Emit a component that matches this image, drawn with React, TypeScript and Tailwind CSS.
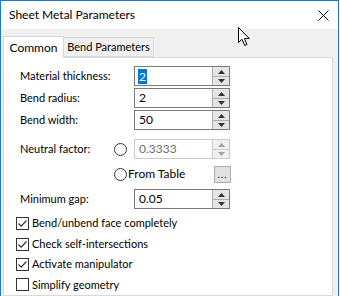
import React from 'react';

const font = { fontFamily: 'Lato, "Noto Sans", sans-serif' };

const Spinner: React.FC<{ disabled?: boolean }> = ({ disabled }) => {
  const fill = disabled ? '#a0a0a0' : '#333';
  return (
    <div className={`flex flex-col w-[17px] h-full border-l ${disabled ? 'border-[#cccccc]' : 'border-[#adadad]'}`}>
      <div className={`flex-1 flex items-center justify-center ${disabled ? 'bg-[#f0f0f0] border-[#cccccc]' : 'bg-[#e5e5e5] border-[#adadad]'} border-b`}>
        <svg width="7" height="4" viewBox="0 0 7 4"><path d="M0 4 L3.5 0 L7 4 Z" fill={fill} /></svg>
      </div>
      <div className={`flex-1 flex items-center justify-center ${disabled ? 'bg-[#f0f0f0]' : 'bg-[#e5e5e5]'}`}>
        <svg width="7" height="4" viewBox="0 0 7 4"><path d="M0 0 L3.5 4 L7 0 Z" fill={fill} /></svg>
      </div>
    </div>
  );
};

const NumberBox: React.FC<{ value: string; selected?: boolean; disabled?: boolean }> = ({ value, selected, disabled }) => (
  <div className={`flex h-[20px] w-[96px] border ${disabled ? 'border-[#cccccc]' : 'border-[#7a7a7a]'} bg-white text-[12px]`}>
    <div className="flex-1 flex items-center pl-[3px]">
      {selected ? (
        <span className="bg-[#0078d7] text-white leading-[15px] px-[1px]">{value}</span>
      ) : (
        <span className={`pl-[1px] ${disabled ? 'text-[#6d6d6d]' : 'text-black'}`}>{value}</span>
      )}
    </div>
    <Spinner disabled={disabled} />
  </div>
);

const Radio: React.FC = () => (
  <div className="w-[13px] h-[13px] rounded-full border border-[#333] bg-white shrink-0" />
);

const Check: React.FC<{ checked: boolean; label: string }> = ({ checked, label }) => (
  <div className="flex items-center h-[20.4px] pl-[12px]">
    <div className="w-[13px] h-[13px] border border-[#333] bg-white flex items-center justify-center">
      {checked && (
        <svg width="11" height="11" viewBox="0 0 11 11">
          <path d="M1.5 5.5 L4.2 8.2 L9.5 2.5" fill="none" stroke="#333" strokeWidth="1.2" />
        </svg>
      )}
    </div>
    <span className="ml-[3px]">{label}</span>
  </div>
);

const Row: React.FC<{ label: string; children: React.ReactNode; className?: string }> = ({ label, children, className }) => (
  <div className={`flex items-center h-[20px] ${className ?? ''}`}>
    <div className="w-[130px] pl-[16px] shrink-0">{label}</div>
    {children}
  </div>
);

export default function App() {
  return (
    <div className="w-[340px] h-[296px] bg-white overflow-hidden relative text-[11px] text-black whitespace-nowrap" style={font}>
      <div className="w-[339px] h-[296px] border-l border-t border-r border-[#1979ca] flex flex-col">
        {/* title bar */}
        <div className="h-[30px] flex items-center justify-between bg-white pl-[8px] pr-[9px]">
          <span className="text-[12px]">Sheet Metal Parameters</span>
          <svg width="11" height="11" viewBox="0 0 11 11">
            <path d="M0.5 0.5 L10.5 10.5 M10.5 0.5 L0.5 10.5" stroke="#111" strokeWidth="1" />
          </svg>
        </div>
        <div className="flex-1 bg-[#f0f0f0] pl-[2px] pr-[5px] pt-[7px] flex flex-col">
          {/* tabs */}
          <div className="flex items-end h-[22px] relative z-10">
            <div className="h-[22px] w-[61px] bg-white border border-b-0 border-[#d9d9d9] flex items-center justify-center text-[12px]">Common</div>
            <div className="h-[20px] w-[90px] bg-[#f0f0f0] border border-l-0 border-[#d9d9d9] flex items-center justify-center mb-[1px]">Bend Parameters</div>
          </div>
          {/* panel */}
          <div className="flex-1 -mt-[1px] bg-white border border-[#d9d9d9] pt-[8px]">
            <Row label="Material thickness:"><NumberBox value="2" selected /></Row>
            <Row label="Bend radius:" className="mt-[2px]"><NumberBox value="2" /></Row>
            <Row label="Bend width:" className="mt-[2px]"><NumberBox value="50" /></Row>
            <div className="flex items-center h-[20px] mt-[9px]">
              <div className="w-[110px] pl-[16px] shrink-0">Neutral factor:</div>
              <Radio />
              <div className="ml-[7px]"><NumberBox value="0.3333" disabled /></div>
            </div>
            <div className="flex items-center h-[20px] mt-[5px]">
              <div className="w-[110px] shrink-0" />
              <Radio />
              <span className="ml-[1px] text-[12px]">From Table</span>
              <div className="ml-auto mr-[101px] w-[17px] h-[17px] border border-[#adadad] bg-[#e1e1e1] flex items-end justify-center pb-[3px]">
                <span className="leading-none text-[10px] tracking-[1px]">...</span>
              </div>
            </div>
            <Row label="Minimum gap:" className="mt-[5px]"><NumberBox value="0.05" /></Row>
            <div className="mt-[4px]">
              <Check checked label="Bend/unbend face completely" />
              <Check checked label="Check self-intersections" />
              <Check checked label="Activate manipulator" />
              <Check checked={false} label="Simplify geometry" />
            </div>
          </div>
        </div>
      </div>
      {/* mouse cursor */}
      <svg className="absolute left-[238px] top-[27px]" width="14" height="20" viewBox="0 0 14 20">
        <path d="M0.5 0.5 L0.5 15.5 L4 12.3 L6.7 18.5 L9 17.5 L6.4 11.5 L11.3 11.5 Z" fill="white" stroke="black" strokeWidth="1" strokeLinejoin="round" />
      </svg>
    </div>
  );
}
